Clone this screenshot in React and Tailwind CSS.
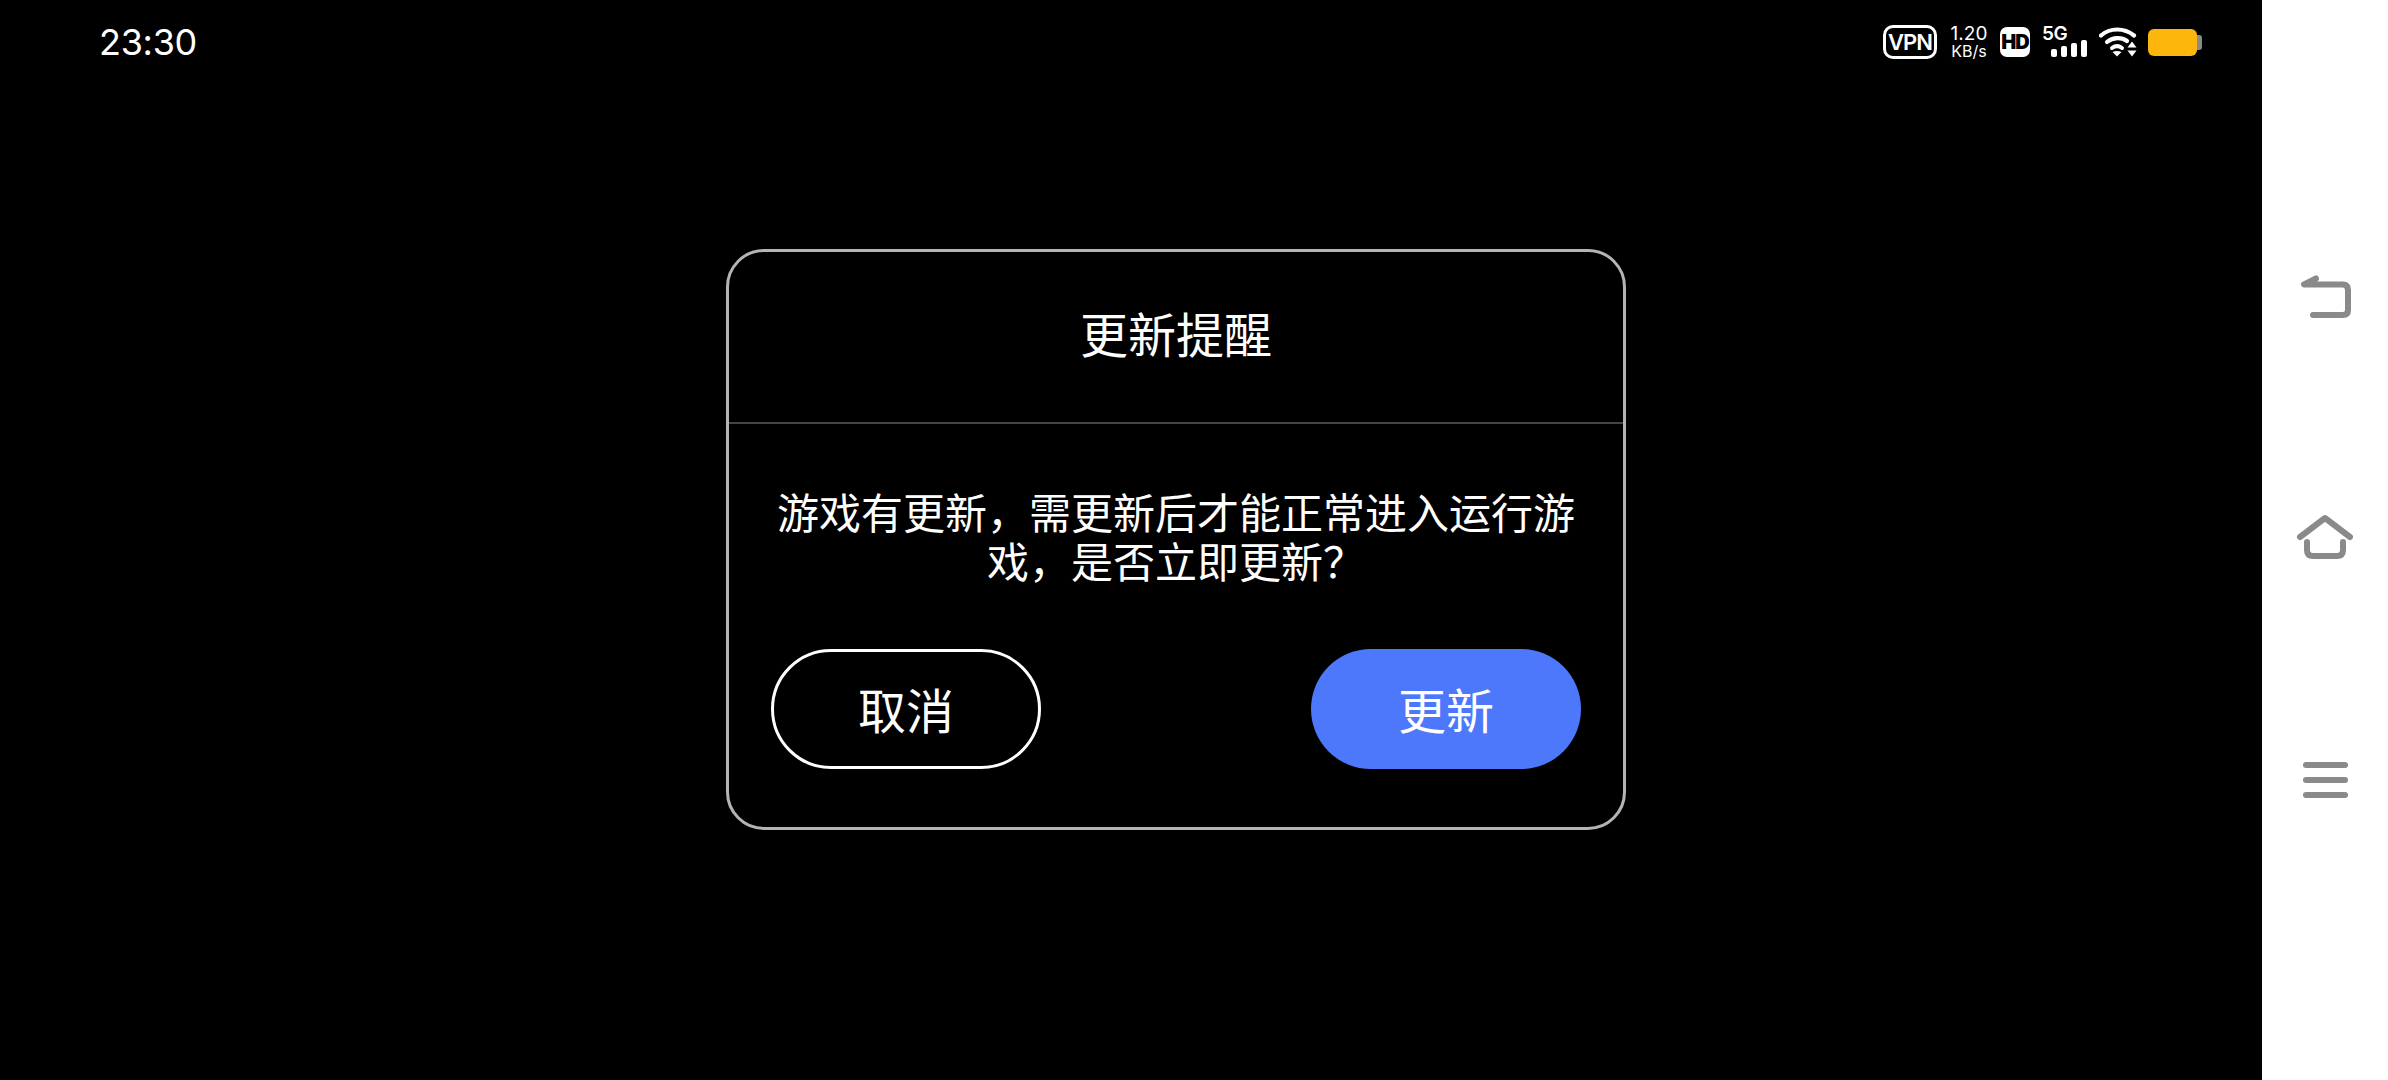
const cjk = { fontFamily: '"Noto Sans CJK SC", sans-serif' };

function Wifi() {
  return (
    <svg width="38" height="30" viewBox="0 0 38 30" fill="none">
      <path d="M2 8.5C11 0.5 25 0.5 35 8.5" stroke="white" strokeWidth="4.2" strokeLinecap="round" />
      <path d="M8 15C14 10 22.5 10 28 14" stroke="white" strokeWidth="4.2" strokeLinecap="round" />
      <path d="M13 21C16 18.8 20 18.8 23 21" stroke="white" strokeWidth="4" strokeLinecap="round" />
      <path d="M18 29.5L13.5 25C16 23.5 20 23.5 22.5 25Z" fill="white" />
      <path d="M33 14.5L37.5 20.5H28.5Z" fill="white" />
      <path d="M33 29.5L37.5 23.5H28.5Z" fill="white" />
    </svg>
  );
}

function Signal() {
  return (
    <svg width="36" height="17" viewBox="0 0 36 17" fill="white">
      <rect x="0" y="9" width="6" height="8" rx="2" />
      <rect x="10" y="6" width="6" height="11" rx="2" />
      <rect x="20" y="3" width="6" height="14" rx="2" />
      <rect x="30" y="0" width="6" height="17" rx="2" />
    </svg>
  );
}

function StatusBar() {
  return (
    <div className="flex h-[84px] items-center justify-between pl-[99px] pr-[60px] text-white">
      <span className="text-[36px] leading-none tracking-[-0.3px]" style={{ fontFamily: 'Inter, sans-serif' }}>23:30</span>
      <div className="flex items-center" style={{ fontFamily: 'Inter, sans-serif' }}>
        <div className="flex h-[34px] w-[54px] items-center justify-center rounded-[10px] border-[3px] border-white text-[22px] font-semibold tracking-[-1px]">
          VPN
        </div>
        <div className="ml-[14px] flex w-[36px] flex-col items-center">
          <span className="text-[19px] leading-[18px]">1.20</span>
          <span className="text-[16px] leading-[16px]">KB/s</span>
        </div>
        <div className="ml-[13px] flex h-[30px] w-[30px] items-center justify-center rounded-[7px] bg-white text-[20px] font-black tracking-[-1px] text-black">
          HD
        </div>
        <div className="ml-[12px] flex h-[30px] w-[45px] flex-col">
          <span className="text-[19px] font-semibold leading-[14px] tracking-[-0.5px]">5G</span>
          <div className="-mt-px ml-[9px]"><Signal /></div>
        </div>
        <div className="ml-[12px]"><Wifi /></div>
        <div className="ml-[11px] flex items-center">
          <div className="h-[27px] w-[49px] rounded-[6px] bg-[#fdb60c]" />
          <div className="h-[15px] w-[5px] rounded-r-[3px] bg-[#8a8a8a]" />
        </div>
      </div>
    </div>
  );
}

function Dialog() {
  return (
    <div className="ml-[726px] mt-[165px] h-[581px] w-[900px] rounded-[38px] border-[3px] border-[#b4b4b4] text-white" style={cjk}>
      <div className="flex h-[172px] items-center justify-center border-b-2 border-[#444444] pb-[10px] text-[48px] leading-none">
        更新提醒
      </div>
      <p className="mt-[62px] px-[45px] text-center text-[42px] leading-[49px]">
        游戏有更新，需更新后才能正常进入运行游戏，是否立即更新？
      </p>
      <div className="mt-[65px] flex justify-between px-[42px]">
        <button className="flex h-[120px] w-[270px] items-center justify-center rounded-full border-[3px] border-white pb-[2px] text-[48px] leading-none">
          取消
        </button>
        <button className="flex h-[120px] w-[270px] items-center justify-center rounded-full bg-[#4d78fc] pb-[2px] text-[48px] leading-none">
          更新
        </button>
      </div>
    </div>
  );
}

function NavBar() {
  return (
    <div className="flex h-[1080px] w-[126px] flex-col items-center bg-white pt-[272px]">
      <svg width="56" height="50" viewBox="0 0 56 50" fill="none" stroke="#8a8a8a" strokeWidth="6" strokeLinecap="round" strokeLinejoin="round">
        <path d="M19 6.5L7 12.5H46Q51 12.5 51 18V38Q51 43 46 43H16" />
      </svg>
      <svg className="mt-[188px]" width="66" height="52" viewBox="0 0 66 52" fill="none" stroke="#8a8a8a" strokeWidth="6" strokeLinecap="round" strokeLinejoin="round">
        <path d="M8 27L33 8L58 27" />
        <path d="M15 32V40Q15 46 21 46H45Q51 46 51 40V32" />
      </svg>
      <div className="mt-[200px] flex flex-col gap-[9px]">
        <div className="h-[6px] w-[45px] rounded-full bg-[#8a8a8a]" />
        <div className="h-[6px] w-[45px] rounded-full bg-[#8a8a8a]" />
        <div className="h-[6px] w-[45px] rounded-full bg-[#8a8a8a]" />
      </div>
    </div>
  );
}

export default function App() {
  return (
    <div className="flex h-[1080px] w-[2388px] overflow-hidden bg-black">
      <div className="h-full w-[2262px]">
        <StatusBar />
        <Dialog />
      </div>
      <NavBar />
    </div>
  );
}
